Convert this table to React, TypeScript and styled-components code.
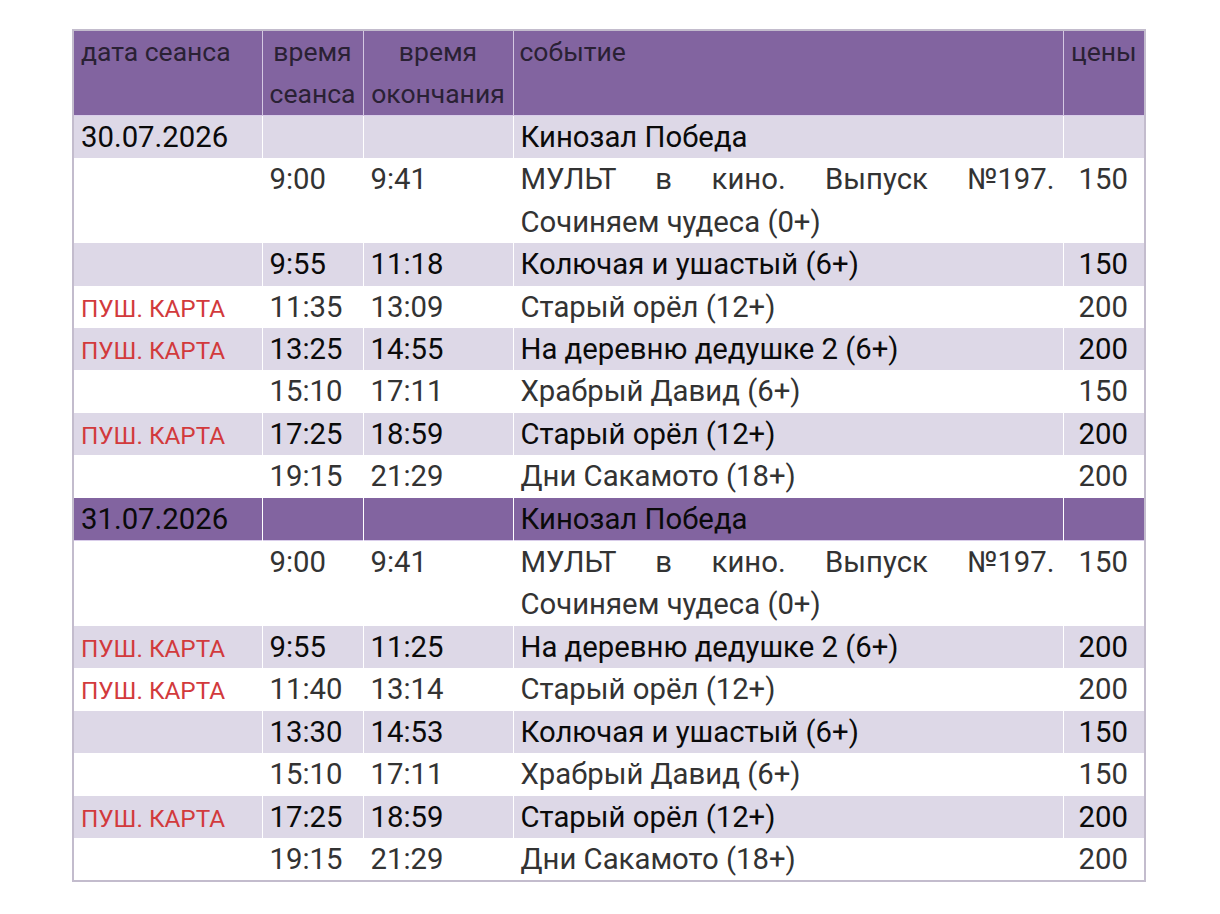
import React from "react";
import styled, { createGlobalStyle, css } from "styled-components";

const Global = createGlobalStyle`
  html, body { margin: 0; padding: 0; background: #ffffff; }
  body { font-family: Roboto, "Noto Sans", "Liberation Sans", sans-serif; }
`;

const Page = styled.div`
  padding: 29px 0 0 72px;
`;

const Table = styled.table`
  width: 1072px;
  border-collapse: collapse;
  table-layout: fixed;
  border: 2px solid #c3bccd;
`;

type Tone = "head" | "purple" | "lav" | "white";

const bgOf = (t: Tone) =>
  t === "head" || t === "purple" ? "#8264a0" : t === "lav" ? "#ddd8e7" : "#ffffff";

const Row = styled.tr<{ $tone: Tone }>`
  background: ${(p) => bgOf(p.$tone)};
  color: ${(p) => (p.$tone === "white" ? "#333333" : p.$tone === "head" ? "#2a2134" : "#0a0a0a")};
  ${(p) =>
    (p.$tone === "head" || p.$tone === "purple") &&
    css`
      border-bottom: 1px solid #d9cdea;
    `}
`;

const HeadCell = styled.th<{ $align?: string }>`
  font-weight: 400;
  font-size: 26.5px;
  line-height: 42px;
  height: 84px;
  vertical-align: top;
  text-align: ${(p) => p.$align || "left"};
  padding: 0 6px;
  border-left: 1px solid #d4c8e2;
  &:first-child { border-left: none; padding-left: 7px; }
  white-space: normal;
`;

const Cell = styled.td<{ $align?: string }>`
  font-size: 29.3px;
  line-height: 42.4px;
  padding: 0 8px 0 7px;
  vertical-align: top;
  text-align: ${(p) => p.$align || "left"};
  border-left: 1px solid #ffffff;
  &:first-child { border-left: none; }
`;

const EventCell = styled(Cell)`
  text-align: justify;
`;

const Promo = styled.span`
  color: #d23a3c;
  font-size: 24.3px;
  line-height: 1;
`;

const IssueNo = styled.span`
  display: inline-block;
  white-space: nowrap;
`;

type Session = { card?: boolean; start: string; end: string; title: React.ReactNode; price: string };

const Mult = (
  <>
    МУЛЬТ в кино. Выпуск <IssueNo>№197.</IssueNo> Сочиняем чудеса (0+)
  </>
);

const day1: Session[] = [
  { start: "9:00", end: "9:41", title: Mult, price: "150" },
  { start: "9:55", end: "11:18", title: "Колючая и ушастый (6+)", price: "150" },
  { card: true, start: "11:35", end: "13:09", title: "Старый орёл (12+)", price: "200" },
  { card: true, start: "13:25", end: "14:55", title: "На деревню дедушке 2 (6+)", price: "200" },
  { start: "15:10", end: "17:11", title: "Храбрый Давид (6+)", price: "150" },
  { card: true, start: "17:25", end: "18:59", title: "Старый орёл (12+)", price: "200" },
  { start: "19:15", end: "21:29", title: "Дни Сакамото (18+)", price: "200" },
];

const day2: Session[] = [
  { start: "9:00", end: "9:41", title: Mult, price: "150" },
  { card: true, start: "9:55", end: "11:25", title: "На деревню дедушке 2 (6+)", price: "200" },
  { card: true, start: "11:40", end: "13:14", title: "Старый орёл (12+)", price: "200" },
  { start: "13:30", end: "14:53", title: "Колючая и ушастый (6+)", price: "150" },
  { start: "15:10", end: "17:11", title: "Храбрый Давид (6+)", price: "150" },
  { card: true, start: "17:25", end: "18:59", title: "Старый орёл (12+)", price: "200" },
  { start: "19:15", end: "21:29", title: "Дни Сакамото (18+)", price: "200" },
];

const Day = ({ date, tone, sessions }: { date: string; tone: Tone; sessions: Session[] }) => (
  <>
    <Row $tone={tone}>
      <Cell>{date}</Cell>
      <Cell />
      <Cell />
      <Cell>Кинозал Победа</Cell>
      <Cell />
    </Row>
    {sessions.map((s, i) => (
      <Row key={i} $tone={i % 2 === 0 ? "white" : "lav"}>
        <Cell>{s.card ? <Promo>ПУШ. КАРТА</Promo> : null}</Cell>
        <Cell>{s.start}</Cell>
        <Cell>{s.end}</Cell>
        <EventCell>{s.title}</EventCell>
        <Cell $align="center">{s.price}</Cell>
      </Row>
    ))}
  </>
);

export default function App() {
  return (
    <Page>
      <Global />
      <Table>
        <colgroup>
          <col style={{ width: 189 }} />
          <col style={{ width: 101 }} />
          <col style={{ width: 150 }} />
          <col style={{ width: 550 }} />
          <col style={{ width: 82 }} />
        </colgroup>
        <thead>
          <Row $tone="head">
            <HeadCell>дата сеанса</HeadCell>
            <HeadCell $align="center">время сеанса</HeadCell>
            <HeadCell $align="center">время окончания</HeadCell>
            <HeadCell>событие</HeadCell>
            <HeadCell $align="center">цены</HeadCell>
          </Row>
        </thead>
        <tbody>
          <Day date="30.07.2026" tone="lav" sessions={day1} />
          <Day date="31.07.2026" tone="purple" sessions={day2} />
        </tbody>
      </Table>
    </Page>
  );
}
